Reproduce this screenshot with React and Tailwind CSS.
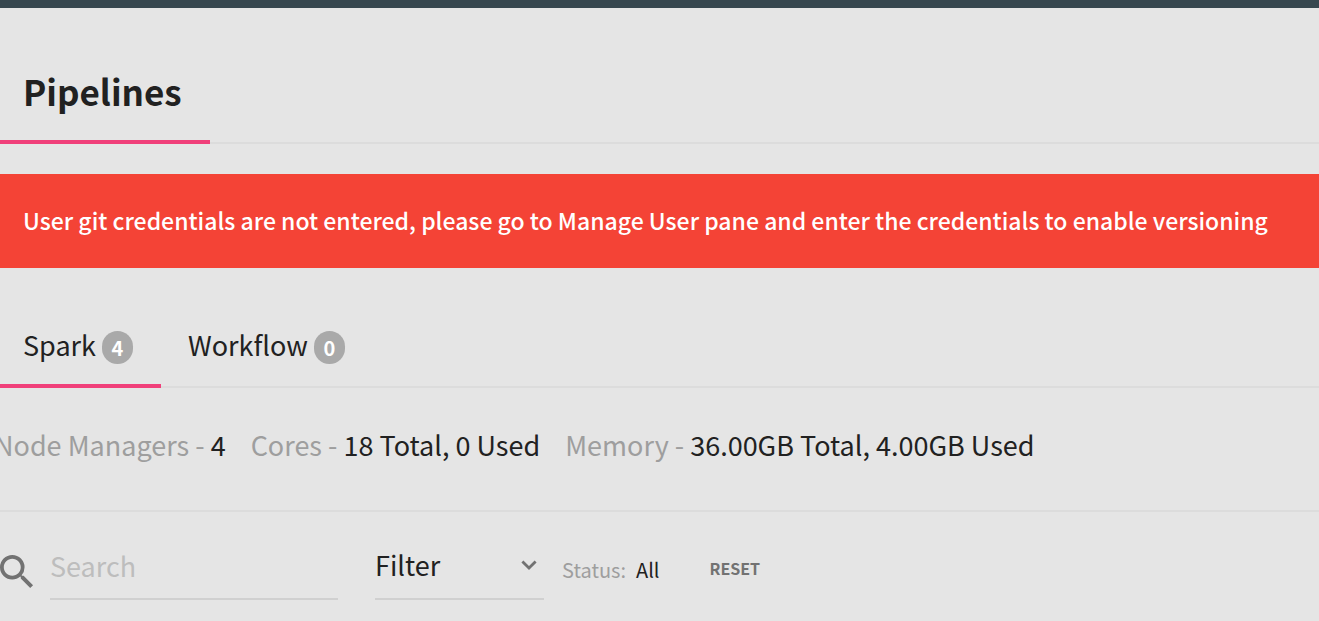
import React, { useState } from "react";

const TABS = [
  { id: "spark", label: "Spark", count: 4 },
  { id: "workflow", label: "Workflow", count: 0 },
];

const STATS = [
  { label: "Node Managers", value: "4" },
  { label: "Cores", value: "18 Total, 0 Used" },
  { label: "Memory", value: "36.00GB Total, 4.00GB Used" },
];

function SearchIcon() {
  return (
    <svg viewBox="3 3 18 18" className="w-[34px] h-[34px] fill-[#727272]" aria-hidden="true">
      <path d="M15.5 14h-.79l-.28-.27A6.471 6.471 0 0 0 16 9.5 6.5 6.5 0 1 0 9.5 16c1.61 0 3.09-.59 4.23-1.57l.27.28v.79l5 4.99L20.49 19l-4.99-5zm-6 0C7.01 14 5 11.99 5 9.5S7.01 5 9.5 5 14 7.01 14 9.5 11.99 14 9.5 14z" />
    </svg>
  );
}

function ChevronIcon() {
  return (
    <svg
      viewBox="0 0 16 10"
      className="absolute right-[7px] top-4 w-4 h-[10px] fill-none stroke-[#727272] pointer-events-none"
      strokeWidth="2.8"
      aria-hidden="true"
    >
      <path d="M1.4 1.4 8 8 14.6 1.4" />
    </svg>
  );
}

function Tab({ tab, active, onSelect }) {
  return (
    <button
      role="tab"
      aria-selected={active}
      onClick={() => onSelect(tab.id)}
      className={`flex items-start gap-1.5 h-20 -mb-0.5 pt-[17px] pl-[23px] pr-7 border-b-4 ${
        active ? "border-[#f0407a]" : "border-transparent"
      }`}
    >
      <span>{tab.label}</span>
      <span className="flex items-center justify-center min-w-[31px] h-[33px] mt-[6px] px-2 rounded-[16px] bg-[#a9a9a9] text-white text-xl leading-8 font-bold">
        {tab.count}
      </span>
    </button>
  );
}

export default function App() {
  const [activeTab, setActiveTab] = useState("spark");
  const [query, setQuery] = useState("");

  return (
    <div className="min-h-screen overflow-hidden bg-[#e5e5e5] text-[#212121] text-[27px] leading-10 font-['Noto_Sans_CJK_SC',sans-serif]">
      <div className="h-2 bg-[#37474f]"></div>

      <header className="flex items-end h-34 border-b-2 border-[#dcdcdc]">
        <h1 className="-mb-0.5 pl-[23px] pr-7 pb-[23px] border-b-4 border-[#f0407a] text-[35px] leading-[52px] font-bold">
          Pipelines
        </h1>
      </header>

      <div role="alert" className="mt-[30px] px-[23px] pt-[26px] pb-7 bg-[#f44336] text-white text-[23px] leading-10 font-medium">
        User git credentials are not entered, please go to Manage User pane and enter the credentials to enable versioning
      </div>

      <div role="tablist" className="flex gap-1 mt-10 border-b-2 border-[#dcdcdc]">
        {TABS.map((tab) => (
          <Tab key={tab.id} tab={tab} active={tab.id === activeTab} onSelect={setActiveTab} />
        ))}
      </div>

      <dl className="flex gap-[25px] -ml-1.5 pt-[37px] pb-[45px] border-b-2 border-[#dcdcdc] whitespace-nowrap">
        {STATS.map((stat) => (
          <div key={stat.label} className="flex gap-1.5">
            <dt className="text-[#9e9e9e]">{stat.label} -</dt>
            <dd>{stat.value}</dd>
          </div>
        ))}
      </dl>

      <div className="flex items-start pt-8">
        <label htmlFor="search" className="mt-[11px] mr-4">
          <SearchIcon />
        </label>
        <input
          id="search"
          type="text"
          aria-label="Search"
          placeholder="Search"
          value={query}
          onChange={(e) => setQuery(e.target.value)}
          className="w-72 h-14 pb-3 mr-[37px] border-b-2 border-[#d0d0d0] bg-transparent outline-none placeholder:text-[#bdbdbd]"
        />
        <div className="relative w-[169px] mr-[18px]">
          <select
            aria-label="Filter"
            className="w-full h-14 pb-3 border-b-2 border-[#d0d0d0] bg-transparent appearance-none outline-none"
          >
            <option>Filter</option>
          </select>
          <ChevronIcon />
        </div>
        <p className="flex gap-2.5 mt-1.5 mr-[50px] text-xl leading-10">
          <span className="text-[#9e9e9e]">Status:</span>
          <span>All</span>
        </p>
        <button className="mt-1.5 text-base leading-9 font-bold text-[#727272]">RESET</button>
      </div>
    </div>
  );
}
